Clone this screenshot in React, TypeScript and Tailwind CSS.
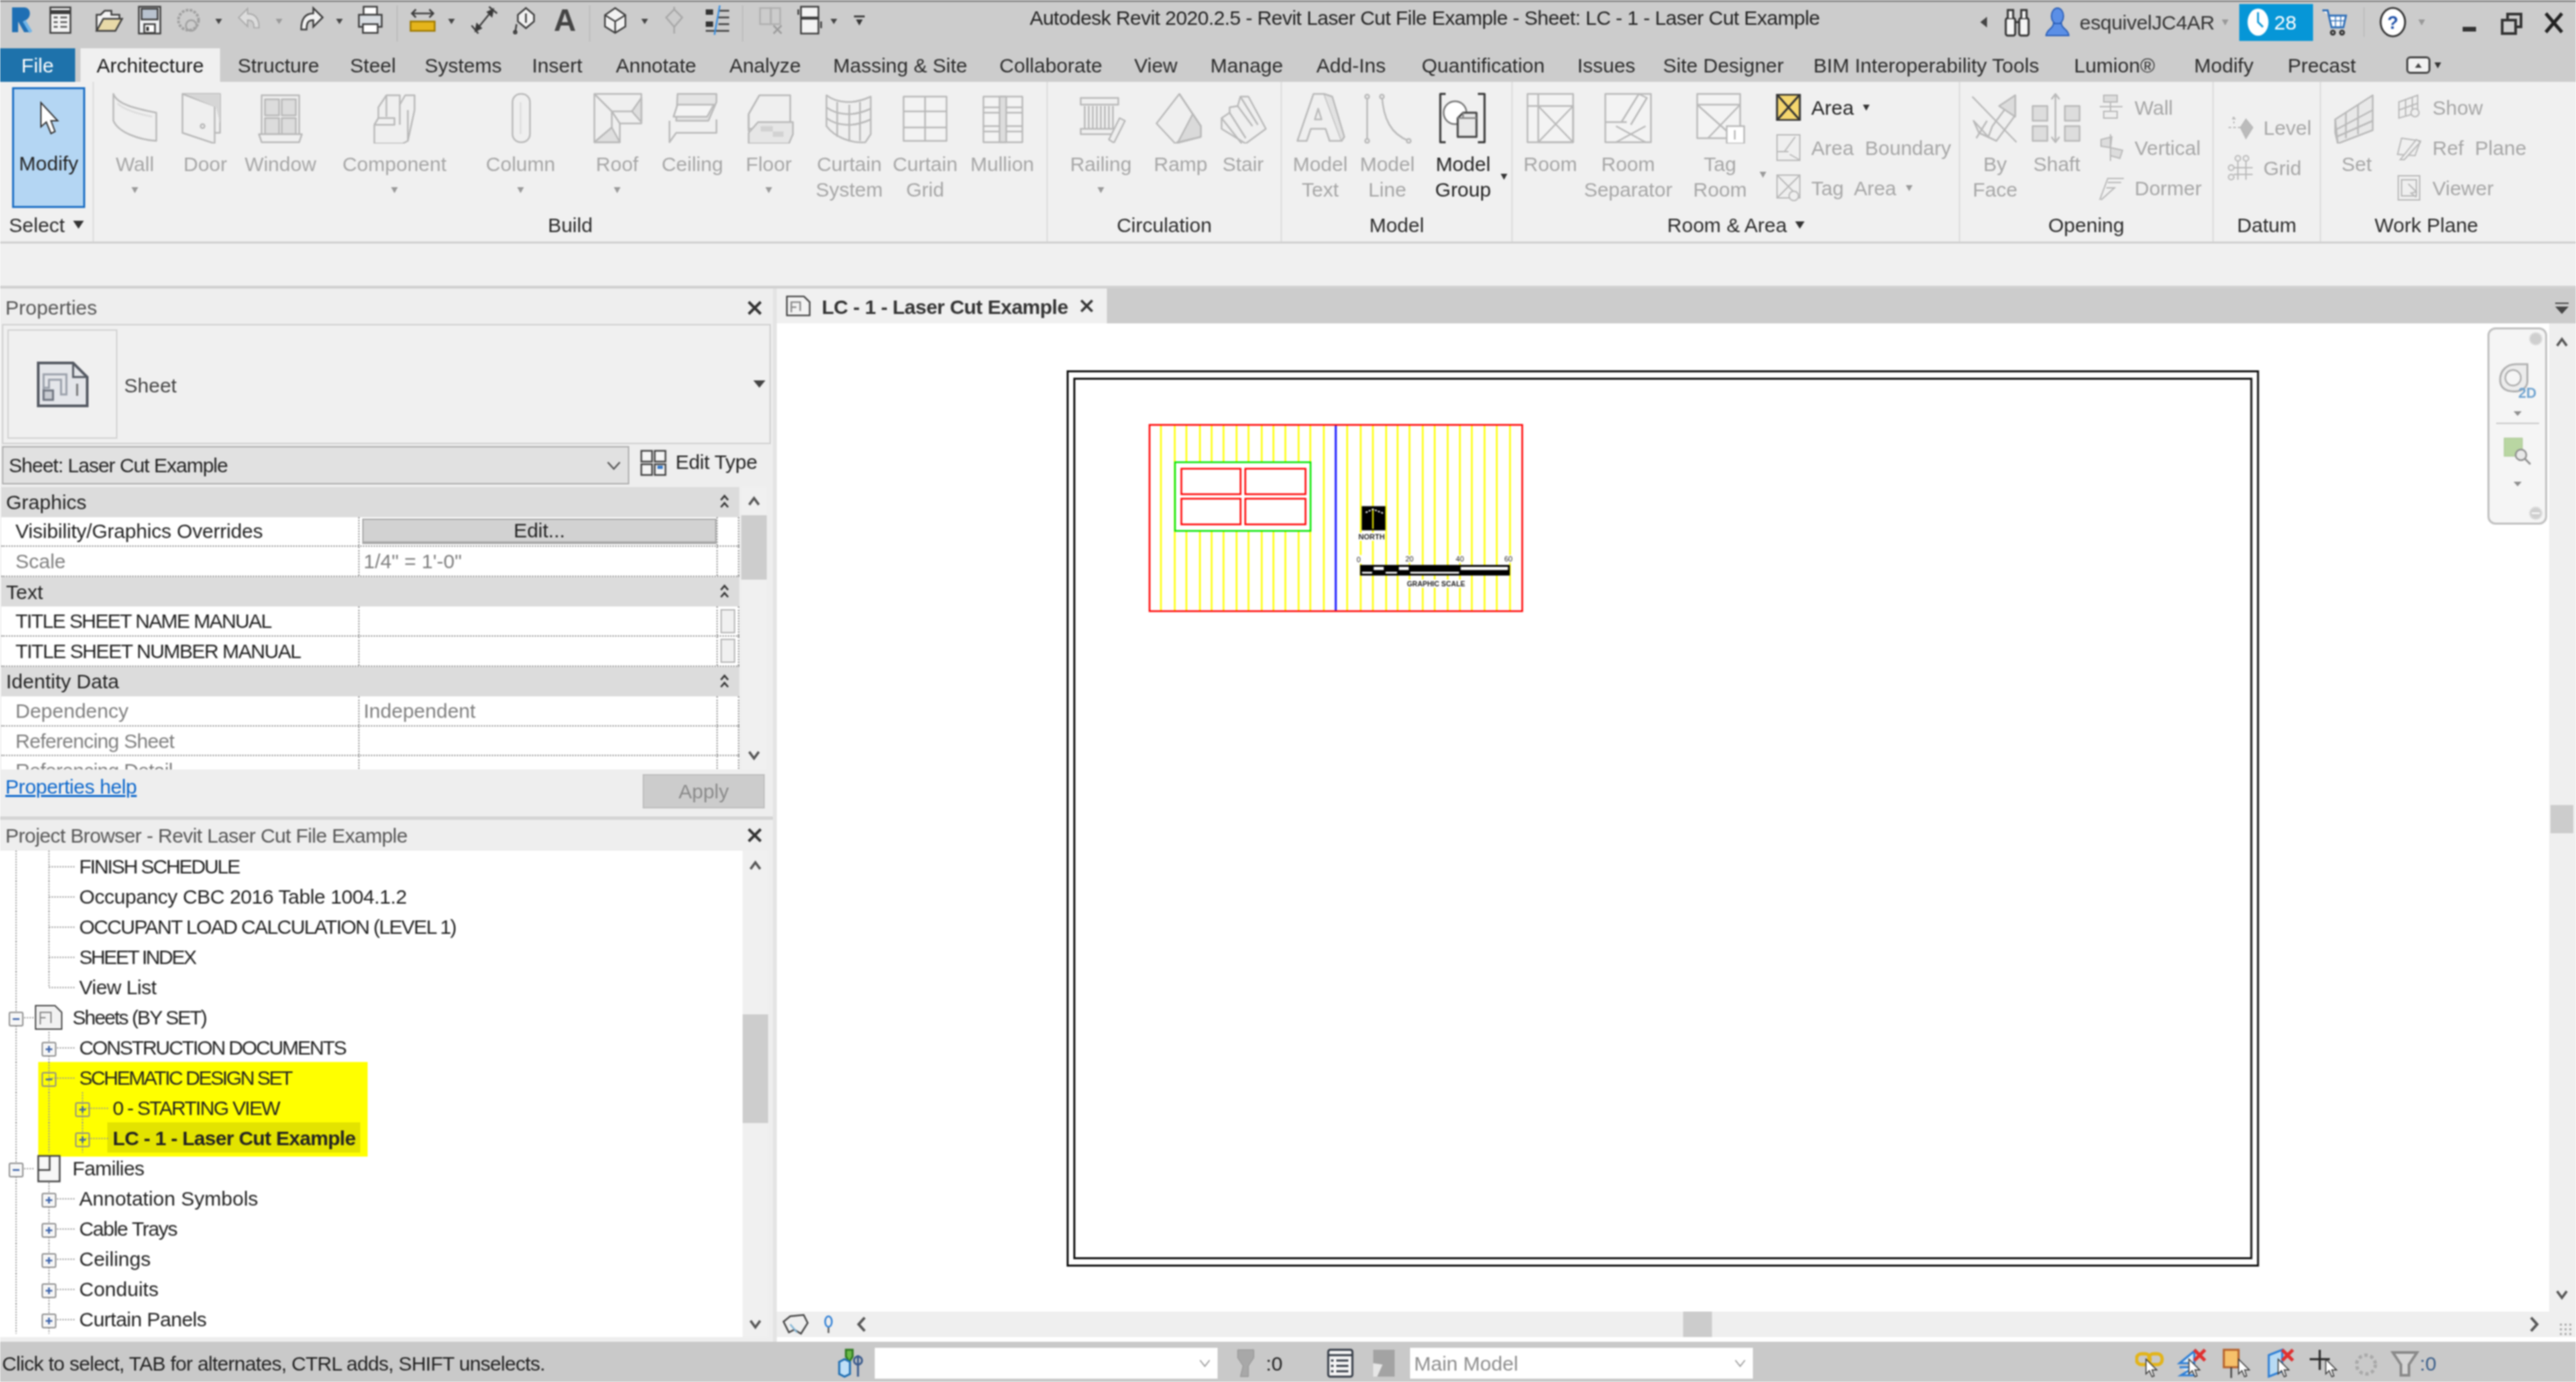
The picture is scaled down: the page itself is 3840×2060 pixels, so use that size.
import type { ReactNode } from "react";

// ---- small drawing helpers ----
const G = "#b9b9b9";

function Big({ children }: { children: ReactNode }) {
  return (
    <svg viewBox="0 0 76 76" className="w-[76px] h-[76px]" fill="#efefef" stroke={G} strokeWidth="2.5" strokeLinejoin="round">
      {children}
    </svg>
  );
}

function Small({ children }: { children: ReactNode }) {
  return (
    <svg viewBox="0 0 40 40" className="w-[40px] h-[40px] shrink-0" fill="#efefef" stroke={G} strokeWidth="2">
      {children}
    </svg>
  );
}

function Q({ w, ml, children, vb }: { w: string; ml: string; children?: ReactNode; vb?: string }) {
  return (
    <svg viewBox={vb ?? "0 0 40 44"} className={`${w} ${ml} h-[44px] shrink-0`} fill="none" stroke="#3c3c3c" strokeWidth="2.5">
      {children}
    </svg>
  );
}

function Dd({ ml, light }: { ml: string; light?: boolean }) {
  return (
    <div className={`${ml} w-[12px] h-[44px] shrink-0 flex items-center justify-center`}>
      <div className={`w-0 h-0 border-x-[5px] border-x-transparent border-t-[8px] mt-[4px] ${light ? "border-t-[#9a9a9a]" : "border-t-[#444444]"}`} />
    </div>
  );
}

function Sep({ ml }: { ml: string }) {
  return <div className={`${ml} w-[2px] h-[54px] bg-[#bcbcbc] shrink-0`} />;
}

function Tri({ dark }: { dark?: boolean }) {
  return <div className={`w-0 h-0 border-x-[5px] border-x-transparent border-t-[9px] ${dark ? "border-t-[#333333]" : "border-t-[#999999]"}`} />;
}

const wall = <><path d="M6 2C12 18 40 24 70 30V72C44 70 14 60 6 42Z" /><path d="M12 16C22 26 44 32 64 36" fill="none" stroke="#dddddd" /></>;
const door = <><path d="M4 2H60V60H52" /><path d="M4 2L52 20V76L4 60Z" /><path d="M8 2H60V46L54 22Z" fill="#d6d6d6" stroke="none" /><circle cx="34" cy="50" r="3" /></>;
const win = <><rect x="10" y="4" width="56" height="60" /><rect x="15" y="10" width="21" height="24" fill="#dcdcdc" /><rect x="40" y="10" width="21" height="24" fill="#dcdcdc" /><rect x="15" y="38" width="21" height="24" fill="#dcdcdc" /><rect x="40" y="38" width="21" height="24" fill="#dcdcdc" /><path d="M6 62H70L66 74H10Z" /></>;
const comp = <><path d="M8 76V48H38V38H14V22L26 4H46V18L54 4H68V26L58 72L50 76Z" /><path d="M26 4V36M46 18V48M8 48L14 38M58 26V72" fill="none" /></>;
const column = <><rect x="26" y="2" width="26" height="72" rx="12" /><path d="M38 14V62" stroke="#dddddd" /></>;
const roof = <><path d="M4 2H74V46H42V74H4Z" /><path d="M4 2L30 28H74M30 28L42 46M30 28V52L4 74" fill="none" /><path d="M60 28L74 8V44Z M30 52L42 74H4Z" fill="#dedede" /></>;
const ceiling = <><path d="M16 2H74V14L62 42H14Z" fill="#e4e4e4" /><path d="M16 18H70L60 36H10Z" fill="#f4f4f4" /><path d="M4 42V74L14 60H74V40" fill="none" /></>;
const floor = <><path d="M24 4H70V54H8V32Z" /><path d="M24 4L8 32V58" fill="none" /><path d="M8 60L22 44H74V62L68 76H8Z" fill="#e6e6e6" /><path d="M26 50H44V58H26ZM44 58H60V66H44Z" fill="#d2d2d2" stroke="none" /></>;
const cSystem = <><path d="M4 4C20 16 44 18 70 6V62L62 74C40 76 16 66 4 50Z" /><path d="M4 22C20 34 44 36 70 24M4 38C20 50 44 52 70 40M20 14V66M38 18V72M54 14V72" fill="none" /></>;
const cGrid = <><rect x="6" y="6" width="64" height="66" fill="#f3f3f3" /><path d="M6 28H70M6 52H70M38 6V72" fill="none" /></>;
const mullion = <><rect x="10" y="6" width="58" height="68" fill="#f3f3f3" /><path d="M10 22H68M10 30H68M10 50H68M10 58H68" fill="none" /><rect x="34" y="6" width="10" height="68" fill="#dddddd" /></>;
const railing = <><rect x="8" y="8" width="56" height="10" /><rect x="8" y="54" width="56" height="8" /><path d="M14 20V54M20 20V54M26 20V54M32 20V54M38 20V54M44 20V54M50 20V54M56 20V54" fill="none" /><path d="M56 74L50 70L66 38L74 42L58 74Z" /></>;
const ramp = <><path d="M36 2L68 50V66L30 76L2 46Z" /><path d="M36 2L68 50L30 76" fill="none" /><path d="M56 32L68 50V66L34 74Z" fill="#dadada" /></>;
const stair = <><path d="M34 6H46L72 54L42 76L6 54V38L18 30V22L30 20Z" /><path d="M18 30L42 68M30 20L52 50M34 6L60 48M6 38L36 76" fill="none" /></>;
const mText = <><path d="M28 2H44L70 72H52L46 54H24L18 72H4Z" /><path d="M30 40H40L35 24Z" /><path d="M44 2L56 6L74 66L70 72" fill="#e2e2e2" /></>;
const mLine = <><path d="M8 4V72M30 4C32 40 44 62 70 72" fill="none" /><circle cx="8" cy="6" r="3" /><circle cx="30" cy="6" r="3" /><circle cx="8" cy="72" r="3" /><circle cx="70" cy="72" r="3" /></>;
const mGroup = <g stroke="#333333"><path d="M12 2H4V74H12M60 2H70V74H60" fill="none" strokeWidth="3" /><circle cx="26" cy="30" r="17" fill="#ffffff" stroke="#777777" /><path d="M30 38L38 30H58V66H30Z" fill="#e8e8e8" stroke="#444444" strokeWidth="3" /><path d="M38 30V38H30M38 38H58" fill="none" stroke="#888888" /></g>;
const room = <><rect x="4" y="2" width="68" height="72" fill="#f3f3f3" /><path d="M4 20H72M20 2V74M20 20H72V74H20ZM20 20L72 74M72 20L20 74" fill="none" /></>;
const roomSep = <><rect x="4" y="2" width="68" height="72" fill="#f3f3f3" /><path d="M4 44H36M28 44L54 2L66 8L42 48M20 50L64 74M64 50L20 74" fill="none" /></>;
const tagRoom = <><rect x="4" y="2" width="64" height="66" fill="#f3f3f3" /><path d="M4 18H68M4 18L60 68M68 18L20 68" fill="none" /><rect x="48" y="50" width="26" height="26" fill="#ffffff" /><path d="M60 56V70" fill="none" /></>;
const byFace = <><path d="M6 42L28 66L34 50L68 4V34L40 72L14 60Z" /><path d="M44 20L68 4V36Z" fill="#dcdcdc" /><path d="M4 6L70 74M10 68L26 42" fill="none" /></>;
const shaft = <><path d="M36 2V74M30 10L36 2L42 10M30 66L36 74L42 66" fill="none" /><rect x="2" y="20" width="22" height="22" fill="#dddddd" /><rect x="50" y="20" width="22" height="22" fill="#dddddd" /><rect x="2" y="50" width="22" height="22" fill="#dddddd" /><rect x="50" y="50" width="22" height="22" fill="#dddddd" /></>;
const setIcon = <><path d="M6 40L62 4V56L10 76Z" fill="#e8e8e8" /><path d="M6 40V60L10 76M22 30V68M40 18V62M6 56L62 26M8 66L62 42" fill="none" /></>;

const sheetIcon = (
  <svg viewBox="0 0 80 70" className="w-[80px] h-[70px]" fill="none" stroke="#4a4f58" strokeWidth="3">
    <path d="M4 3H56L77 24V67H4Z" fill="#e4e6ea" stroke="#555a63" strokeWidth="4" />
    <path d="M56 3V24H77" stroke="#555a63" />
    <path d="M12 58V20H46V50H38V28H20V40H12" stroke="#9aa0aa" strokeWidth="3" />
    <rect x="12" y="44" width="14" height="14" stroke="#6f7580" fill="#c9ccd2" />
    <path d="M62 34V52" stroke="#777" />
  </svg>
);

// ---- data ----
const TABS = [
  { t: "Structure", c: "w-[170px]" },
  { t: "Steel", c: "w-[112px]" },
  { t: "Systems", c: "w-[157px]" },
  { t: "Insert", c: "w-[123px]" },
  { t: "Annotate", c: "w-[172px]" },
  { t: "Analyze", c: "w-[153px]" },
  { t: "Massing & Site", c: "w-[250px]" },
  { t: "Collaborate", c: "w-[199px]" },
  { t: "View", c: "w-[114px]" },
  { t: "Manage", c: "w-[157px]" },
  { t: "Add-Ins", c: "w-[154px]" },
  { t: "Quantification", c: "w-[240px]" },
  { t: "Issues", c: "w-[127px]" },
  { t: "Site Designer", c: "w-[222px]" },
  { t: "BIM Interoperability Tools", c: "w-[383px]" },
  { t: "Lumion®", c: "w-[178px]" },
  { t: "Modify", c: "w-[148px]" },
  { t: "Precast", c: "w-[144px]" },
];

const BUILD = [
  { l: ["Wall"], c: "w-[122px]", i: wall, dd: true },
  { l: ["Door"], c: "w-[88px]", i: door },
  { l: ["Window"], c: "w-[136px]", i: win },
  { l: ["Component"], c: "w-[204px]", i: comp, dd: true },
  { l: ["Column"], c: "w-[172px]", i: column, dd: true },
  { l: ["Roof"], c: "w-[116px]", i: roof, dd: true },
  { l: ["Ceiling"], c: "w-[108px]", i: ceiling },
  { l: ["Floor"], c: "w-[120px]", i: floor, dd: true },
  { l: ["Curtain", "System"], c: "w-[120px]", i: cSystem },
  { l: ["Curtain", "Grid"], c: "w-[106px]", i: cGrid },
  { l: ["Mullion"], c: "w-[124px]", i: mullion },
];

const PROP_ROWS = [
  { h: "Graphics" },
  { a: "Visibility/Graphics Overrides", edit: true, s: "tracking-[-0.2px]" },
  { a: "Scale", b: "1/4\" = 1'-0\"", dim: true },
  { h: "Text" },
  { a: "TITLE SHEET NAME MANUAL", box: true, s: "tracking-[-1.6px]" },
  { a: "TITLE SHEET NUMBER MANUAL", box: true, s: "tracking-[-1.45px]" },
  { h: "Identity Data" },
  { a: "Dependency", b: "Independent", dim: true },
  { a: "Referencing Sheet", dim: true, s: "tracking-[-0.7px]" },
  { a: "Referencing Detail", dim: true, s: "tracking-[-0.7px]" },
];

type TreeRow = { t: string; lvl: 1 | 2 | 3; s?: string; exp?: "+" | "-"; icon?: "sheet" | "fam"; hl?: boolean; sel?: boolean; last?: boolean };

const TREE: TreeRow[] = [
  { t: "FINISH SCHEDULE", lvl: 2, s: "tracking-[-2.1px]" },
  { t: "Occupancy CBC 2016 Table 1004.1.2", lvl: 2, s: "tracking-[-0.4px]" },
  { t: "OCCUPANT LOAD CALCULATION (LEVEL 1)", lvl: 2, s: "tracking-[-1.6px]" },
  { t: "SHEET INDEX", lvl: 2, s: "tracking-[-2.4px]" },
  { t: "View List", lvl: 2, last: true, s: "tracking-[-0.5px]" },
  { t: "Sheets (BY SET)", lvl: 1, exp: "-", icon: "sheet", s: "tracking-[-1.9px]" },
  { t: "CONSTRUCTION DOCUMENTS", lvl: 2, exp: "+", s: "tracking-[-2.1px]" },
  { t: "SCHEMATIC DESIGN SET", lvl: 2, exp: "-", hl: true, s: "tracking-[-2.4px]" },
  { t: "0 - STARTING VIEW", lvl: 3, exp: "+", hl: true, s: "tracking-[-1.7px]" },
  { t: "LC - 1 - Laser Cut Example", lvl: 3, exp: "+", hl: true, sel: true, s: "font-bold tracking-[-0.7px]" },
  { t: "Families", lvl: 1, exp: "-", icon: "fam", s: "tracking-[-0.6px]" },
  { t: "Annotation Symbols", lvl: 2, exp: "+" },
  { t: "Cable Trays", lvl: 2, exp: "+", s: "tracking-[-1.3px]" },
  { t: "Ceilings", lvl: 2, exp: "+" },
  { t: "Conduits", lvl: 2, exp: "+" },
  { t: "Curtain Panels", lvl: 2, exp: "+", s: "tracking-[-0.5px]" },
];

// ---- ribbon parts ----
function RibbonBtn({ l, c, i, dd, dark }: { l: string[]; c: string; i: ReactNode; dd?: boolean; dark?: boolean }) {
  return (
    <div className={`${c} shrink-0 flex flex-col items-center pt-[16px] ${dark ? "text-[#222222]" : "text-[#a6a6a6]"}`}>
      <div className="h-[76px]">
        <Big>{i}</Big>
      </div>
      <div className="mt-[12px] text-center leading-[38px] whitespace-nowrap">
        {l.map((x) => (
          <div key={x}>{x}</div>
        ))}
      </div>
      {dd && (
        <div className="h-[38px] flex items-center">
          <Tri />
        </div>
      )}
    </div>
  );
}

function SmallRow({ i, t, dark, dd, c }: { i: ReactNode; t: string; dark?: boolean; dd?: boolean; c: string }) {
  return (
    <div className={`flex items-center ${c} ${dark ? "text-[#222222]" : "text-[#a6a6a6]"}`}>
      {i}
      <span className="ml-[14px] whitespace-pre">{t}</span>
      {dd && (
        <div className="ml-[14px]">
          <Tri dark={dark} />
        </div>
      )}
    </div>
  );
}

function Panel({ c, label, children, arrow }: { c: string; label: string; children: ReactNode; arrow?: boolean }) {
  return (
    <div className={`${c} shrink-0 h-full flex flex-col border-r-2 border-[#dcdcdc] last:border-r-0`}>
      <div className="h-[188px] flex">{children}</div>
      <div className="h-[50px] flex items-center justify-center text-[#2a2a2a] gap-[12px]">
        {label}
        {arrow && <div className="w-0 h-0 border-x-[7px] border-x-transparent border-t-[11px] border-t-[#333333]" />}
      </div>
    </div>
  );
}

function TitleBar() {
  return (
    <div className="h-[72px] bg-[#cccccc] border-t-[3px] border-[#8a8a8a] flex items-start pt-[5px] shrink-0">
      <svg viewBox="0 0 38 44" className="ml-[14px] w-[38px] h-[44px] shrink-0">
        <path d="M4 40V3H22C33 3 34 20 22 23L32 40H22L13 24V40Z" fill="#1f6fb4" />
        <path d="M22 23L32 40" stroke="#6fb4e8" strokeWidth="5" />
      </svg>
      <Q w="w-[36px]" ml="ml-[20px]" vb="0 0 36 44">
        <rect x="3" y="3" width="30" height="38" fill="#f4f4f4" />
        <path d="M3 10H33" strokeWidth="6" />
        <path d="M8 18H14M18 18H28M8 25H14M18 25H28M8 32H14M18 32H28" stroke="#555" />
      </Q>
      <Q w="w-[44px]" ml="ml-[32px]" vb="0 0 44 44">
        <path d="M4 38V14H10L16 8H26V14H38V20" fill="#f4f4f4" />
        <path d="M4 38L14 20H42L32 38Z" fill="#e8d9a8" />
      </Q>
      <Q w="w-[42px]" ml="ml-[18px]" vb="0 0 40 44">
        <rect x="4" y="2" width="32" height="40" fill="#f0f2f4" />
        <rect x="8" y="5" width="24" height="16" fill="#b9c3cf" />
        <rect x="12" y="28" width="16" height="13" fill="#fff" />
        <rect x="15" y="32" width="4" height="6" fill="#333" stroke="none" />
      </Q>
      <Q w="w-[42px]" ml="ml-[18px]" vb="0 0 40 44">
        <circle cx="18" cy="22" r="15" stroke="#a0a0a0" strokeDasharray="4 2" strokeWidth="4" />
        <circle cx="22" cy="30" r="8" stroke="#a0a0a0" />
      </Q>
      <Dd ml="ml-[16px]" />
      <Q w="w-[38px]" ml="ml-[20px]">
        <path d="M4 18L18 4V12C30 12 36 20 36 34H28C28 26 26 22 18 22V32Z" stroke="#aaaaaa" fill="#dddddd" strokeWidth="2" />
      </Q>
      <Dd ml="ml-[20px]" light />
      <Q w="w-[40px]" ml="ml-[23px]">
        <path d="M36 18L22 4V12C10 12 4 20 4 36H12C12 26 14 22 22 22V32Z" fill="#f2f2f2" />
      </Q>
      <Dd ml="ml-[15px]" />
      <Q w="w-[40px]" ml="ml-[20px]">
        <rect x="10" y="2" width="20" height="12" fill="#fff" />
        <rect x="3" y="14" width="34" height="18" fill="#d8dde2" />
        <rect x="9" y="28" width="22" height="13" fill="#fff" />
      </Q>
      <Sep ml="ml-[19px]" />
      <Q w="w-[40px]" ml="ml-[17px]">
        <path d="M4 12H36M10 6L4 12L10 18M30 6L36 12L30 18" />
        <rect x="2" y="24" width="36" height="14" fill="#e5b51c" stroke="#a07a00" />
      </Q>
      <Dd ml="ml-[17px]" />
      <Q w="w-[42px]" ml="ml-[21px]">
        <path d="M8 38L34 6M2 30L12 42M28 2L40 12" />
        <path d="M8 38L10 28L16 34ZM34 6L32 16L26 10Z" fill="#333" />
      </Q>
      <Q w="w-[40px]" ml="ml-[20px]">
        <path d="M22 4L34 14V24L22 34L10 24V14Z" fill="#f2f2f2" />
        <path d="M22 12V26M8 28L6 40" />
        <circle cx="6" cy="40" r="2" />
      </Q>
      <div className="ml-[23px] w-[34px] h-[44px] shrink-0 flex items-center justify-center text-[46px] leading-[44px] font-bold text-[#444444]">A</div>
      <Sep ml="ml-[19px]" />
      <Q w="w-[38px]" ml="ml-[18px]">
        <path d="M4 14L20 3L36 14V32L20 42L4 32Z" fill="#f2f2f2" />
        <path d="M4 14L20 24L36 14M20 24V42" />
      </Q>
      <Dd ml="ml-[19px]" />
      <Q w="w-[30px]" ml="ml-[23px]" vb="0 0 30 44">
        <path d="M15 6L27 18L15 32L3 18Z" stroke="#a8a8a8" />
        <path d="M15 2V8M15 32V42" stroke="#a8a8a8" />
      </Q>
      <Q w="w-[42px]" ml="ml-[28px]">
        <path d="M3 6H14V14H3ZM3 24H14V32H3Z" fill="#333" stroke="none" />
        <path d="M22 8H38M22 18H38M22 28H38M3 38H38" />
        <path d="M24 0L16 44" stroke="#3b8fe0" />
      </Q>
      <Sep ml="ml-[16px]" />
      <Q w="w-[42px]" ml="ml-[20px]">
        <rect x="4" y="4" width="16" height="24" stroke="#b0b0b0" />
        <rect x="20" y="4" width="14" height="24" stroke="#b0b0b0" />
        <path d="M24 30L36 42M36 30L24 42" stroke="#9a9a9a" />
      </Q>
      <Q w="w-[42px]" ml="ml-[15px]">
        <rect x="8" y="2" width="26" height="16" fill="#f3f3f3" />
        <rect x="8" y="20" width="26" height="22" fill="#f3f3f3" />
        <path d="M4 6V14M38 24V34" />
      </Q>
      <Dd ml="ml-[10px]" />
      <div className="ml-[24px] w-[16px] h-[44px] shrink-0 flex flex-col items-center justify-center">
        <div className="w-[16px] h-[3px] bg-[#444444] mb-[3px]" />
        <Tri dark />
      </div>
      <div className="ml-[246px] w-[1180px] shrink-0 whitespace-nowrap leading-[34px] mt-[2px] text-[#222222] tracking-[-0.55px]">
        Autodesk Revit 2020.2.5 - Revit Laser Cut File Example - Sheet: LC - 1 - Laser Cut Example
      </div>
      <div className="ml-[237px] flex items-center h-[56px] -mt-[3px]">
        <div className="w-0 h-0 border-y-[8px] border-y-transparent border-r-[10px] border-r-[#444444]" />
        <svg viewBox="0 0 40 44" className="ml-[25px] w-[40px] h-[44px] shrink-0" fill="#f5f5f5" stroke="#333" strokeWidth="3">
          <rect x="3" y="16" width="14" height="26" rx="3" />
          <rect x="23" y="16" width="14" height="26" rx="3" />
          <path d="M6 16V4H14V16M26 16V4H34V16M17 22H23" />
        </svg>
        <svg viewBox="0 0 40 44" className="ml-[20px] w-[40px] h-[44px] shrink-0" fill="#5b8fe6" stroke="#2b5fb8" strokeWidth="2">
          <ellipse cx="20" cy="13" rx="9" ry="12" />
          <path d="M14 24C14 32 4 32 3 42H37C36 32 26 32 26 24Z" />
        </svg>
        <div className="ml-[13px] w-[212px] text-[#333333] whitespace-nowrap tracking-[-0.3px]">esquivelJC4AR</div>
        <Tri />
        <div className="ml-[16px] w-[110px] h-[55px] bg-[#0696d7] flex items-center pl-[10px] text-white gap-[6px]">
          <svg viewBox="0 0 36 48" className="w-[36px] h-[44px]">
            <ellipse cx="18" cy="24" rx="17" ry="22" fill="#ffffff" />
            <path d="M18 8V24L26 32" stroke="#0696d7" strokeWidth="3" fill="none" />
          </svg>
          28
        </div>
        <svg viewBox="0 0 42 44" className="ml-[12px] w-[41px] h-[44px] shrink-0" fill="none" stroke="#2f6fb8" strokeWidth="3">
          <path d="M2 4H10L16 30H34L38 12H12" fill="#ffffff" />
          <path d="M14 20H36M22 12V30M30 12V30" strokeWidth="1.5" />
          <circle cx="18" cy="38" r="3" stroke="#333" />
          <circle cx="32" cy="38" r="3" stroke="#333" />
        </svg>
        <div className="ml-[22px] w-[2px] h-[44px] bg-[#bdbdbd]" />
        <svg viewBox="0 0 42 48" className="ml-[21px] w-[42px] h-[46px] shrink-0">
          <ellipse cx="21" cy="24" rx="19" ry="22" fill="#ffffff" stroke="#333" strokeWidth="3" />
          <text x="21" y="34" textAnchor="middle" fontSize="28" fontWeight="700" fill="#1d4fa8" fontFamily="Liberation Sans">?</text>
        </svg>
        <div className="ml-[17px]">
          <Tri />
        </div>
        <div className="ml-[56px] w-[20px] h-[7px] bg-[#333333] mt-[20px]" />
        <svg viewBox="0 0 32 34" className="ml-[37px] w-[32px] h-[34px] shrink-0 mt-[4px]" fill="none" stroke="#333" strokeWidth="4">
          <rect x="2" y="12" width="20" height="20" />
          <path d="M10 10V3H30V22H24" />
        </svg>
        <svg viewBox="0 0 30 32" className="ml-[32px] w-[30px] h-[32px] shrink-0 mt-[2px]" stroke="#222" strokeWidth="5">
          <path d="M3 2L27 30M27 2L3 30" />
        </svg>
      </div>
    </div>
  );
}

function Tabs() {
  return (
    <div className="h-[50px] bg-[#cccccc] flex items-stretch shrink-0">
      <div className="w-[112px] bg-[#1e72ab] text-white flex items-center justify-center">File</div>
      <div className="ml-[8px] w-[208px] bg-[#f0f0f0] flex items-center justify-center text-[#1a1a1a]">Architecture</div>
      <div className="w-[2px]" />
      {TABS.map((t) => (
        <div key={t.t} className={`${t.c} flex items-center justify-center text-[#2a2a2a] whitespace-nowrap`}>
          {t.t}
        </div>
      ))}
      <div className="ml-[54px] flex items-center gap-[6px]">
        <div className="w-[36px] h-[26px] rounded-[6px] border-[3px] border-[#444444] bg-[#f2f2f2] flex items-center justify-center">
          <div className="w-0 h-0 border-x-[5px] border-x-transparent border-b-[7px] border-b-[#444444]" />
        </div>
        <Tri dark />
      </div>
    </div>
  );
}

function Ribbon() {
  return (
    <div className="h-[238px] bg-[#f0f0f0] flex shrink-0 text-[30px]">
      <div className="w-[140px] shrink-0 h-full flex flex-col border-r-2 border-[#dcdcdc]">
        <div className="h-[188px] pl-[18px] pt-[8px]">
          <div className="w-[109px] h-[180px] bg-[#b4d6f3] border-[3px] border-[#1c6fc4] flex flex-col items-center pt-[18px] text-[#222222]">
            <svg viewBox="0 0 32 52" className="w-[32px] h-[52px]" fill="#ffffff" stroke="#333" strokeWidth="2">
              <path d="M4 2V38L12 31L19 48L25 45L19 29H29Z" />
            </svg>
            <div className="mt-[22px] leading-[38px]">Modify</div>
          </div>
        </div>
        <div className="h-[50px] flex items-center justify-center gap-[12px] text-[#2a2a2a]">
          Select
          <div className="w-0 h-0 border-x-[8px] border-x-transparent border-t-[12px] border-t-[#333333]" />
        </div>
      </div>

      <Panel c="w-[1422px]" label="Build">
        {BUILD.map((b) => (
          <RibbonBtn key={b.l.join()} {...b} />
        ))}
      </Panel>

      <Panel c="w-[349px]" label="Circulation">
        <RibbonBtn l={["Railing"]} c="w-[158px]" i={railing} dd />
        <RibbonBtn l={["Ramp"]} c="w-[80px]" i={ramp} />
        <RibbonBtn l={["Stair"]} c="w-[106px]" i={stair} />
      </Panel>

      <Panel c="w-[344px]" label="Model">
        <RibbonBtn l={["Model", "Text"]} c="w-[114px]" i={mText} />
        <RibbonBtn l={["Model", "Line"]} c="w-[86px]" i={mLine} />
        <div className="relative">
          <RibbonBtn l={["Model", "Group"]} c="w-[140px]" i={mGroup} dark />
          <div className="absolute right-[4px] top-[137px]">
            <Tri dark />
          </div>
        </div>
      </Panel>

      <Panel c="w-[667px]" label="Room & Area" arrow>
        <RibbonBtn l={["Room"]} c="w-[112px]" i={room} />
        <RibbonBtn l={["Room", "Separator"]} c="w-[120px]" i={roomSep} />
        <div className="relative">
          <RibbonBtn l={["Tag", "Room"]} c="w-[154px]" i={tagRoom} />
          <div className="absolute right-[8px] top-[134px]">
            <Tri />
          </div>
        </div>
        <div className="pl-[5px] pt-[18px] flex flex-col gap-[20px]">
          <SmallRow c="h-[40px]" i={<svg viewBox="0 0 40 40" className="w-[40px] h-[40px]" fill="#f5d76e" stroke="#333" strokeWidth="3"><rect x="3" y="1" width="34" height="38" /><path d="M3 1L37 39M37 1L3 39" fill="none" /></svg>} t="Area" dark dd />
          <SmallRow c="h-[40px]" i={<Small><rect x="3" y="1" width="34" height="38" /><path d="M3 26H20M14 26L30 4M22 30L36 38" fill="none" /></Small>} t="Area  Boundary" />
          <SmallRow c="h-[40px]" i={<Small><rect x="3" y="1" width="34" height="34" /><path d="M3 1L37 35M37 1L3 35" fill="none" /><circle cx="28" cy="32" r="7" /></Small>} t="Tag  Area" dd />
        </div>
      </Panel>

      <Panel c="w-[378px]" label="Opening">
        <RibbonBtn l={["By", "Face"]} c="w-[104px]" i={byFace} />
        <RibbonBtn l={["Shaft"]} c="w-[80px]" i={shaft} />
        <div className="pl-[22px] pt-[18px] flex flex-col gap-[20px]">
          <SmallRow c="h-[40px]" i={<Small><rect x="8" y="2" width="20" height="10" fill="#dddddd" /><rect x="8" y="26" width="20" height="10" /><path d="M2 19H36M18 12V26" fill="none" /></Small>} t="Wall" />
          <SmallRow c="h-[40px]" i={<Small><path d="M4 8L20 4L18 20L4 18ZM18 20L36 24L32 36L18 32Z" fill="#dddddd" /><path d="M18 0V40" fill="none" /></Small>} t="Vertical" />
          <SmallRow c="h-[40px]" i={<Small><path d="M2 38L14 6H38M14 12H34M12 20H24L4 38" fill="none" /></Small>} t="Dormer" />
        </div>
      </Panel>

      <Panel c="w-[160px]" label="Datum">
        <div className="pl-[20px] pt-[48px] flex flex-col gap-[20px]">
          <SmallRow c="h-[40px]" i={<Small><path d="M2 20H34M10 4V14M8 8L10 4L12 8" fill="none" strokeDasharray="4 3" /><path d="M28 8L38 20L28 36L20 20Z" fill="#bbbbbb" /></Small>} t="Level" />
          <SmallRow c="h-[40px]" i={<Small><circle cx="16" cy="6" r="4" /><circle cx="28" cy="6" r="4" /><circle cx="6" cy="20" r="4" /><circle cx="6" cy="34" r="4" /><path d="M16 10V38M28 10V38M10 20H38M10 30H38" fill="none" /></Small>} t="Grid" />
        </div>
      </Panel>

      <Panel c="w-[314px]" label="Work Plane">
        <RibbonBtn l={["Set"]} c="w-[106px]" i={setIcon} />
        <div className="pl-[6px] pt-[18px] flex flex-col gap-[20px]">
          <SmallRow c="h-[40px]" i={<Small><path d="M4 12L32 2V28L4 36Z" /><path d="M14 8V32M24 6V30M4 24L32 14" fill="none" /><circle cx="28" cy="28" r="6" /></Small>} t="Show" />
          <SmallRow c="h-[40px]" i={<Small><path d="M8 6L36 10L28 32L2 30Z" fill="none" /><path d="M6 38L30 8L36 12L12 38Z" /></Small>} t="Ref  Plane" />
          <SmallRow c="h-[40px]" i={<Small><rect x="3" y="2" width="32" height="36" /><path d="M8 8H30V32H8ZM18 14L30 26L22 28L30 34" fill="none" /></Small>} t="Viewer" />
        </div>
      </Panel>
    </div>
  );
}

// ---- properties palette ----
function Chev({ up, c }: { up?: boolean; c?: string }) {
  return (
    <svg viewBox="0 0 22 20" className={`w-[22px] h-[18px] ${c ?? ""}`} fill="none" stroke="#555555" strokeWidth="4">
      <path d={up ? "M3 16L11 5L19 16" : "M3 4L11 15L19 4"} />
    </svg>
  );
}

function Combo({ c, text }: { c: string; text?: string }) {
  return (
    <div className={`${c} h-[46px] bg-white flex items-center shrink-0`}>
      <span className="pl-[6px] text-[#8d8d8d] flex-1">{text}</span>
      <svg viewBox="0 0 20 14" className="w-[18px] h-[14px] mr-[10px]" fill="none" stroke="#9a9a9a" strokeWidth="2">
        <path d="M2 2L10 12L18 2" />
      </svg>
    </div>
  );
}

function PropRow({ r }: { r: (typeof PROP_ROWS)[number] }) {
  if (r.h) {
    return (
      <div className="h-[44.6px] bg-[#dcdcdc] flex items-center justify-between pl-[7px] pr-[14px] text-[#222222] shrink-0">
        {r.h}
        <svg viewBox="0 0 18 26" className="w-[16px] h-[24px]" fill="none" stroke="#333333" strokeWidth="3">
          <path d="M3 10L9 3L15 10M3 22L9 15L15 22" />
        </svg>
      </div>
    );
  }
  return (
    <div className={`h-[44.6px] bg-white flex border-b-2 border-dotted border-[#8c8c8c] shrink-0 ${r.dim ? "text-[#7f7f7f]" : "text-[#222222]"}`}>
      <div className={`w-[534px] pl-[21px] flex items-center border-r-2 border-dotted border-[#8c8c8c] whitespace-nowrap ${r.s ?? ""}`}>{r.a}</div>
      <div className="w-[534px] flex items-center border-r-2 border-dotted border-[#8c8c8c] pl-[6px]">
        {r.edit ? (
          <div className="w-[528px] -ml-[2px] h-[38px] bg-[#d2d2d2] border-2 border-[#a8a8a8] border-b-[4px] flex items-center justify-center text-[#222222]">Edit...</div>
        ) : (
          r.b
        )}
      </div>
      <div className="flex-1 flex items-center justify-center border-r-2 border-dotted border-[#8c8c8c]">
        {r.box && <div className="w-[22px] h-[36px] bg-[#f0f0f0] border-2 border-[#b5b5b5]" />}
      </div>
    </div>
  );
}

function Properties() {
  return (
    <div className="h-[787px] bg-[#eeeeee] flex flex-col shrink-0 text-[#222222]">
      <div className="h-[53px] flex items-center justify-between pl-[8px] pr-[15px] pt-[4px] shrink-0">
        <span className="text-[#555555]">Properties</span>
        <CloseX />
      </div>
      <div className="mx-[3px] h-[179px] border-2 border-[#cfcfcf] bg-[#f0f0f0] flex items-center pl-[6px] shrink-0">
        <div className="w-[164px] h-[163px] border-2 border-[#d2d2d2] flex items-center justify-center">{sheetIcon}</div>
        <span className="ml-[10px] pt-[3px] flex-1 text-[#444444]">Sheet</span>
        <div className="mr-[6px] w-0 h-0 border-x-[9px] border-x-transparent border-t-[11px] border-t-[#444444]" />
      </div>
      <div className="mt-[3px] flex h-[57px] shrink-0">
        <div className="ml-[3px] w-[935px] bg-[#e1e1e1] border-2 border-[#adadad] flex items-center pl-[8px] justify-between pr-[10px] tracking-[-1px]">
          Sheet: Laser Cut Example
          <svg viewBox="0 0 22 14" className="w-[22px] h-[14px]" fill="none" stroke="#555555" strokeWidth="2.5">
            <path d="M2 2L11 12L20 2" />
          </svg>
        </div>
        <svg viewBox="0 0 40 40" className="ml-[16px] w-[40px] h-[40px] mt-[5px]" fill="#f4f4f4" stroke="#444" strokeWidth="2.5">
          <rect x="2" y="2" width="16" height="16" />
          <rect x="22" y="2" width="16" height="16" />
          <rect x="2" y="22" width="16" height="16" />
          <rect x="22" y="22" width="16" height="16" />
          <rect x="26" y="24" width="8" height="5" fill="#3a7bc8" stroke="none" />
        </svg>
        <span className="ml-[13px] mt-[4px] leading-[40px] whitespace-nowrap tracking-[-0.3px]">Edit Type</span>
      </div>
      <div className="mt-[4px] h-[421px] flex shrink-0">
        <div className="ml-[2px] w-[1100px] h-full overflow-hidden bg-white flex flex-col">
          {PROP_ROWS.map((r, i) => (
            <PropRow key={i} r={r} />
          ))}
        </div>
        <div className="ml-[3px] w-[38px] h-full bg-[#f0f0f0] flex flex-col items-center">
          <div className="h-[42px] flex items-center"><Chev up /></div>
          <div className="w-full h-[96px] bg-[#cdcdcd]" />
          <div className="flex-1" />
          <div className="h-[42px] flex items-center"><Chev /></div>
        </div>
      </div>
      <div className="flex-1 flex items-start justify-between pl-[8px] pr-[12px]">
        <span className="mt-[8px] leading-[36px] text-[#0a66cc] underline tracking-[-0.4px]">Properties help</span>
        <div className="mt-[7px] w-[182px] h-[51px] bg-[#cccccc] border-2 border-[#bdbdbd] flex items-center justify-center text-[#8a8a8a]">Apply</div>
      </div>
    </div>
  );
}

function CloseX() {
  return (
    <svg viewBox="0 0 24 24" className="w-[24px] h-[24px]" stroke="#333333" strokeWidth="4">
      <path d="M3 3L21 21M21 3L3 21" />
    </svg>
  );
}

// ---- project browser ----
function Gutter({ r }: { r: TreeRow }) {
  const w = r.lvl === 1 ? 108 : r.lvl === 2 ? 118 : 168;
  const xExp = r.lvl === 1 ? 24 : r.lvl === 2 ? 73 : 123;
  const dot = "#9a9a9a";
  const boxFill = r.hl ? "none" : "#f7f7f7";
  const endX = r.lvl === 1 ? 50 : xExp + 38;
  return (
    <svg width={w} height={45} className="shrink-0" fill="none">
      <path d="M24 0V45" stroke={dot} strokeWidth="2" strokeDasharray="2 2" />
      {r.lvl !== 1 && <path d={r.last ? "M73 0V23" : "M73 0V45"} stroke={dot} strokeWidth="2" strokeDasharray="2 2" />}
      {r.lvl === 3 && <path d="M123 0V45" stroke={dot} strokeWidth="2" strokeDasharray="2 2" />}
      <path d={`M${xExp} 24H${endX}`} stroke={dot} strokeWidth="2" strokeDasharray="2 2" />
      {r.exp && (
        <g>
          <rect x={xExp - 10} y={16} width={20} height={20} rx={2} fill={boxFill} stroke="#8d8d8d" strokeWidth="2" />
          <path d={r.exp === "+" ? `M${xExp - 5} 26H${xExp + 5}M${xExp} 21V31` : `M${xExp - 5} 26H${xExp + 5}`} stroke="#3b62a8" strokeWidth="2.5" />
        </g>
      )}
      {r.icon === "sheet" && (
        <g stroke="#444444" strokeWidth="2">
          <path d="M53 6H82L92 16V41H53Z" fill="#f2f2f2" />
          <path d="M60 34V16H76V32M60 24H68" stroke="#888888" />
        </g>
      )}
      {r.icon === "fam" && (
        <g stroke="#444444" strokeWidth="2.5">
          <rect x="57" y="5" width="32" height="38" fill="#f7f7f7" />
          <path d="M57 26H74V5" />
        </g>
      )}
    </svg>
  );
}

function ProjectBrowser() {
  return (
    <div className="h-[778px] bg-[#eeeeee] flex flex-col shrink-0">
      <div className="h-[46px] flex items-center justify-between pl-[8px] pr-[15px] shrink-0">
        <span className="text-[#555555] whitespace-nowrap tracking-[-0.6px]">Project Browser - Revit Laser Cut File Example</span>
        <CloseX />
      </div>
      <div className="h-[725px] flex shrink-0">
        <div className="w-[1107px] bg-white overflow-hidden flex flex-col">
          {TREE.map((r) => (
            <div key={r.t} className="h-[45px] flex items-center relative shrink-0 text-[#222222]">
              {r.hl && <div className={`absolute left-[57px] w-[491px] top-0 bg-[#ffff00] ${r.sel ? "h-[51px]" : "h-[45px]"}`} />}
              {r.sel && <div className="absolute left-[160px] w-[377px] top-0 h-[45px] bg-[#e3e300]" />}
              <div className="relative flex items-center whitespace-nowrap">
                <Gutter r={r} />
                <span className={`pt-[2px] ${r.s ?? ""}`}>{r.t}</span>
              </div>
            </div>
          ))}
        </div>
        <div className="w-[38px] bg-[#f0f0f0] flex flex-col items-center relative">
          <div className="h-[44px] flex items-center"><Chev up /></div>
          <div className="absolute top-[244px] w-full h-[162px] bg-[#cdcdcd]" />
          <div className="flex-1" />
          <div className="h-[38px] flex items-center"><Chev /></div>
        </div>
      </div>
    </div>
  );
}

// ---- sheet drawing ----
const YELLOW_X = [128, 180, 224, 275, 319, 364, 413, 458, 508, 552, 597, 647, 691, 742, 830, 881, 927, 977, 1020, 1065, 1115, 1160, 1209, 1255, 1300, 1348, 1394, 1444];

function SheetDrawing() {
  // zoom coords (z) are mapped to sheet coords
  const sx = (z: number) => z / 2.529 + 90;
  const sy = (z: number) => z / 3 + 58;
  const RED = "#ff0000";
  const box = (x1: number, y1: number, x2: number, y2: number, stroke: string, fill: string, sw = 2.5) => (
    <rect x={sx(x1)} y={sy(y1)} width={sx(x2) - sx(x1)} height={sy(y2) - sy(y1)} stroke={stroke} fill={fill} strokeWidth={sw} />
  );
  return (
    <svg width={1778} height={1337} className="ml-[432px] mt-[70px] block" fill="none">
      <rect x="1.5" y="1.5" width="1774.5" height="1333" stroke="#111111" strokeWidth="3" />
      <rect x="11.5" y="12.5" width="1754.5" height="1311" stroke="#111111" strokeWidth="3" />
      {YELLOW_X.map((x) => (
        <line key={x} x1={sx(x)} x2={sx(x)} y1={sy(70)} y2={sy(903)} stroke="#ffff00" strokeWidth="2.5" />
      ))}
      <line x1={sx(787)} x2={sx(787)} y1={sy(70)} y2={sy(903)} stroke="#1a1aff" strokeWidth="3" />
      {box(85, 70, 1490, 903, RED, "none")}
      {box(181, 237, 692, 544, "#00e600", "#ffffff")}
      {box(205, 266, 428, 380, RED, "none")}
      {box(446, 266, 673, 380, RED, "none")}
      {box(205, 400, 428, 515, RED, "none")}
      {box(446, 400, 673, 515, RED, "none")}
      {box(886, 435, 973, 540, "#000000", "#000000", 1)}
      <line x1={sx(927)} x2={sx(927)} y1={sy(445)} y2={sy(535)} stroke="#ffff00" strokeWidth="2" />
      <path d={`M${sx(900)} ${sy(462)}L${sx(927)} ${sy(447)}L${sx(965)} ${sy(465)}`} stroke="#ffffff" strokeWidth="2" strokeDasharray="3 2" />
      {box(873, 552, 970, 588, "#ffffff", "#ffffff", 0)}
      <text x={sx(922)} y={sy(581)} textAnchor="middle" fontSize="11" fontWeight="700" fill="#222222" fontFamily="Liberation Sans">NORTH</text>
      {box(860, 652, 888, 690, "#ffffff", "#ffffff", 0)}
      {box(1048, 652, 1084, 686, "#ffffff", "#ffffff", 0)}
      {box(1238, 652, 1272, 686, "#ffffff", "#ffffff", 0)}
      {box(1420, 652, 1455, 686, "#ffffff", "#ffffff", 0)}
      <text x={sx(873)} y={sy(683)} textAnchor="middle" fontSize="11" fill="#222222" fontFamily="Liberation Sans">0</text>
      <text x={sx(1065)} y={sy(680)} textAnchor="middle" fontSize="11" fill="#222222" fontFamily="Liberation Sans">20</text>
      <text x={sx(1255)} y={sy(680)} textAnchor="middle" fontSize="11" fill="#222222" fontFamily="Liberation Sans">40</text>
      <text x={sx(1438)} y={sy(680)} textAnchor="middle" fontSize="11" fill="#222222" fontFamily="Liberation Sans">60</text>
      {box(880, 698, 1442, 742, "#000000", "#000000", 1)}
      {box(930, 705, 968, 719, "#ffffff", "#ffffff", 0)}
      {box(1025, 705, 1062, 719, "#ffffff", "#ffffff", 0)}
      {box(1258, 705, 1436, 719, "#ffffff", "#ffffff", 0)}
      {box(886, 727, 924, 735, "#ffffff", "#ffffff", 0)}
      {box(975, 727, 1018, 735, "#ffffff", "#ffffff", 0)}
      {box(1068, 727, 1252, 735, "#ffffff", "#ffffff", 0)}
      {box(1050, 762, 1278, 798, "#ffffff", "#ffffff", 0)}
      <text x={sx(1165)} y={sy(791)} textAnchor="middle" fontSize="10.5" fontWeight="700" fill="#222222" fontFamily="Liberation Sans">GRAPHIC SCALE</text>
    </svg>
  );
}

function ViewCanvas() {
  return (
    <div className="flex-1 flex flex-col min-w-0">
      <div className="h-[52px] bg-[#cccccc] flex items-stretch justify-between shrink-0">
        <div className="w-[492px] bg-[#f0f0f0] flex items-center pl-[12px]">
          <svg viewBox="0 0 42 36" className="w-[40px] h-[34px] shrink-0" fill="#f2f2f2" stroke="#444444" strokeWidth="2.5">
            <path d="M3 3H30L39 12V33H3Z" />
            <path d="M10 28V12H24V26M10 20H18" fill="none" stroke="#888888" />
          </svg>
          <span className="ml-[15px] pt-[2px] font-bold text-[#333333] whitespace-nowrap tracking-[-0.5px]">LC - 1 - Laser Cut Example</span>
          <svg viewBox="0 0 24 24" className="ml-[17px] w-[22px] h-[22px] shrink-0" stroke="#333333" strokeWidth="4">
            <path d="M3 3L21 21M21 3L3 21" />
          </svg>
        </div>
        <div className="w-[38px] flex flex-col items-center justify-center pt-[6px] mr-[2px]">
          <div className="w-[20px] h-[2px] bg-[#444444] mb-[4px]" />
          <div className="w-0 h-0 border-x-[10px] border-x-transparent border-t-[11px] border-t-[#444444]" />
        </div>
      </div>
      <div className="h-[1473px] flex shrink-0">
        <div className="flex-1 bg-white relative overflow-hidden">
          <SheetDrawing />
          <div className="absolute left-[2550px] top-[6px] w-[89px] h-[294px] rounded-[12px] border-[3px] border-[#c0c0c0] bg-[#f5f5f5] flex flex-col items-center">
            <div className="self-end mt-[4px] mr-[4px] w-[20px] h-[20px] rounded-full bg-[#cfcfcf] border-2 border-[#dddddd]" />
            <svg viewBox="0 0 62 60" className="mt-[24px] w-[60px] h-[58px]" fill="none">
              <path d="M4 28C4 14 14 4 28 4H46V30C46 40 38 46 26 46C12 46 4 40 4 28Z" fill="#ececec" stroke="#b0b0b0" strokeWidth="3" />
              <circle cx="24" cy="25" r="12" fill="#f5f5f5" stroke="#b0b0b0" strokeWidth="2.5" />
              <text x="32" y="56" fontSize="22" fontWeight="700" fill="#6fa3d0" fontFamily="Liberation Sans">2D</text>
            </svg>
            <div className="mt-[16px] w-0 h-0 border-x-[6px] border-x-transparent border-t-[7px] border-t-[#8f8f8f]" />
            <div className="mt-[10px] w-[64px] h-[2px] bg-[#c8c8c8]" />
            <svg viewBox="0 0 42 42" className="mt-[20px] w-[42px] h-[42px]" fill="none">
              <rect x="1" y="1" width="27" height="27" fill="#b9d6a2" stroke="#a4c48e" />
              <circle cx="26" cy="26" r="8" fill="#e8e8e8" stroke="#909090" strokeWidth="2.5" />
              <path d="M32 32L40 40" stroke="#909090" strokeWidth="3" />
            </svg>
            <div className="mt-[24px] w-0 h-0 border-x-[6px] border-x-transparent border-t-[7px] border-t-[#8f8f8f]" />
            <div className="mt-auto mb-[4px] self-end mr-[4px] w-[20px] h-[20px] rounded-full bg-[#cfcfcf] border-2 border-[#dddddd] flex items-center justify-center">
              <div className="w-[12px] h-[2px] bg-white" />
            </div>
          </div>
        </div>
        <div className="w-[40px] bg-[#efefef] flex flex-col items-center relative">
          <div className="h-[56px] flex items-center mr-[2px]"><Chev up /></div>
          <div className="absolute top-[718px] left-[2px] w-[34px] h-[42px] bg-[#cccccc]" />
          <div className="flex-1" />
          <div className="h-[50px] flex items-center mr-[2px]"><Chev /></div>
        </div>
      </div>
      <div className="h-[38px] bg-[#efefef] flex items-center shrink-0 relative">
        <svg viewBox="0 0 44 36" className="ml-[6px] w-[44px] h-[36px] shrink-0" fill="none" stroke="#444444" strokeWidth="2.5">
          <path d="M4 14L14 6L34 4L40 16L30 32L20 26L12 30Z" />
          <path d="M14 18L24 30" stroke="#7fb4d6" />
        </svg>
        <svg viewBox="0 0 14 30" className="ml-[20px] w-[14px] h-[30px] shrink-0" fill="none" stroke="#2e7fd6" strokeWidth="2.5">
          <ellipse cx="7" cy="11" rx="5" ry="8" />
          <path d="M7 20V28" stroke="#555555" />
        </svg>
        <svg viewBox="0 0 14 24" className="ml-[35px] w-[14px] h-[24px] shrink-0" fill="none" stroke="#555555" strokeWidth="4">
          <path d="M12 2L3 12L12 22" />
        </svg>
        <div className="absolute left-[1351px] top-0 w-[43px] h-[38px] bg-[#cccccc]" />
        <svg viewBox="0 0 14 24" className="ml-auto mr-[55px] w-[14px] h-[24px] shrink-0" fill="none" stroke="#555555" strokeWidth="4">
          <path d="M2 2L11 12L2 22" />
        </svg>
        <div className="absolute right-[4px] bottom-[0px] w-[22px] h-[22px] bg-[radial-gradient(#a8a8a8_35%,transparent_40%)] bg-[length:7px_7px]" />
      </div>
      <div className="h-[7px] bg-white shrink-0" />
    </div>
  );
}

function Cursor() {
  return (
    <g fill="#ffffff" stroke="#333333" strokeWidth="1.5">
      <path d="M16 16V38L21 33L25 42L28 41L25 32H32Z" />
    </g>
  );
}

function StatusBar() {
  return (
    <div className="h-[60px] bg-[#c9c9c9] flex items-center shrink-0 pt-[4px]">
      <div className="w-[1245px] pl-[3px] shrink-0 whitespace-nowrap text-[#222222] tracking-[-0.7px]">Click to select, TAB for alternates, CTRL adds, SHIFT unselects.</div>
      <svg viewBox="0 0 44 44" className="w-[44px] h-[44px] shrink-0" fill="none" strokeWidth="3">
        <path d="M16 2H26V12L21 20L16 12Z" fill="#6dbb4a" stroke="#2f7a20" />
        <path d="M6 20L14 16L22 20V38L14 42L6 38Z" fill="#bfe0f7" stroke="#1f6fb4" />
        <path d="M34 10V42" stroke="#3a5a8c" />
        <circle cx="34" cy="18" r="6" stroke="#3a5a8c" />
      </svg>
      <Combo c="ml-[15px] w-[511px]" />
      <svg viewBox="0 0 36 44" className="ml-[24px] w-[36px] h-[44px] shrink-0" fill="none">
        <path d="M6 2H30V14L22 26V42H10L14 26L6 14Z" fill="#a8a8a8" stroke="#8f8f8f" />
      </svg>
      <span className="ml-[12px] w-[24px] text-[#222222]">:0</span>
      <svg viewBox="0 0 40 44" className="ml-[67px] w-[40px] h-[44px] shrink-0" fill="#f6f6f6" stroke="#333a45" strokeWidth="3">
        <rect x="2" y="2" width="36" height="40" rx="3" />
        <path d="M2 10H38M14 18H32M14 26H32M14 34H32M6 18H10M6 26H10M6 34H10" fill="none" />
      </svg>
      <svg viewBox="0 0 36 44" className="ml-[27px] w-[36px] h-[44px] shrink-0" fill="#a3a3a3">
        <rect x="2" y="2" width="32" height="40" />
        <path d="M2 22L16 24L8 42H2Z" fill="#e6e6e6" />
      </svg>
      <Combo c="ml-[21px] w-[511px]" text="Main Model" />
      <svg viewBox="0 0 424 44" className="ml-[570px] w-[424px] h-[44px] shrink-0" fill="none">
        <g>
          <rect x="2" y="8" width="20" height="16" rx="7" stroke="#e3b419" strokeWidth="5" />
          <rect x="20" y="8" width="20" height="16" rx="7" stroke="#e3b419" strokeWidth="5" />
          <Cursor />
        </g>
        <g transform="translate(64,0)">
          <path d="M2 22L24 4V22ZM2 28H24L4 40H24" stroke="#2e7fd6" strokeWidth="3" fill="#dcecf8" />
          <path d="M24 2L40 18M40 2L24 18" stroke="#e03030" strokeWidth="5" />
          <Cursor />
        </g>
        <g transform="translate(130,0)">
          <rect x="2" y="2" width="22" height="26" fill="#f6c16b" stroke="#b5602a" strokeWidth="3" />
          <path d="M13 28V44" stroke="#444444" strokeWidth="2.5" />
          <g transform="translate(8,0)"><Cursor /></g>
        </g>
        <g transform="translate(197,0)">
          <path d="M2 10L22 2V34L2 42Z" fill="#b8daf3" stroke="#2e7fd6" strokeWidth="3" />
          <path d="M22 2L38 18M38 2L22 18" stroke="#e03030" strokeWidth="5" />
          <Cursor />
        </g>
        <g transform="translate(260,0)">
          <path d="M0 16H30M15 2V32" stroke="#222222" strokeWidth="3" />
          <g transform="translate(8,0)"><Cursor /></g>
        </g>
        <circle cx="344" cy="24" r="14" stroke="#a9a9a9" strokeWidth="5" strokeDasharray="5 4" />
        <path d="M384 6H420L408 24V40H396V24Z" fill="#d5d5d5" stroke="#8a8a8a" strokeWidth="4" />
      </svg>
      <span className="text-[#3c5f8a] whitespace-nowrap">:0</span>
    </div>
  );
}

export default function App() {
  return (
    <div className="w-[3840px] h-[2060px] overflow-hidden flex flex-col bg-[#f0f0f0] text-[30px] font-['Liberation_Sans',Arial,sans-serif] blur-[0.8px]">
      <TitleBar />
      <Tabs />
      <Ribbon />
      <div className="h-[70px] bg-[#f0f0f0] border-t-[3px] border-b-[4px] border-[#d0d0d0] shrink-0" />
      <div className="h-[1570px] flex shrink-0">
        <div className="w-[1152px] shrink-0 flex flex-col bg-[#eeeeee]">
          <Properties />
          <div className="h-[5px] bg-[#d4d4d4] shrink-0" />
          <ProjectBrowser />
        </div>
        <div className="w-[6px] bg-[#e4e4e4] shrink-0" />
        <ViewCanvas />
      </div>
      <StatusBar />
    </div>
  );
}
